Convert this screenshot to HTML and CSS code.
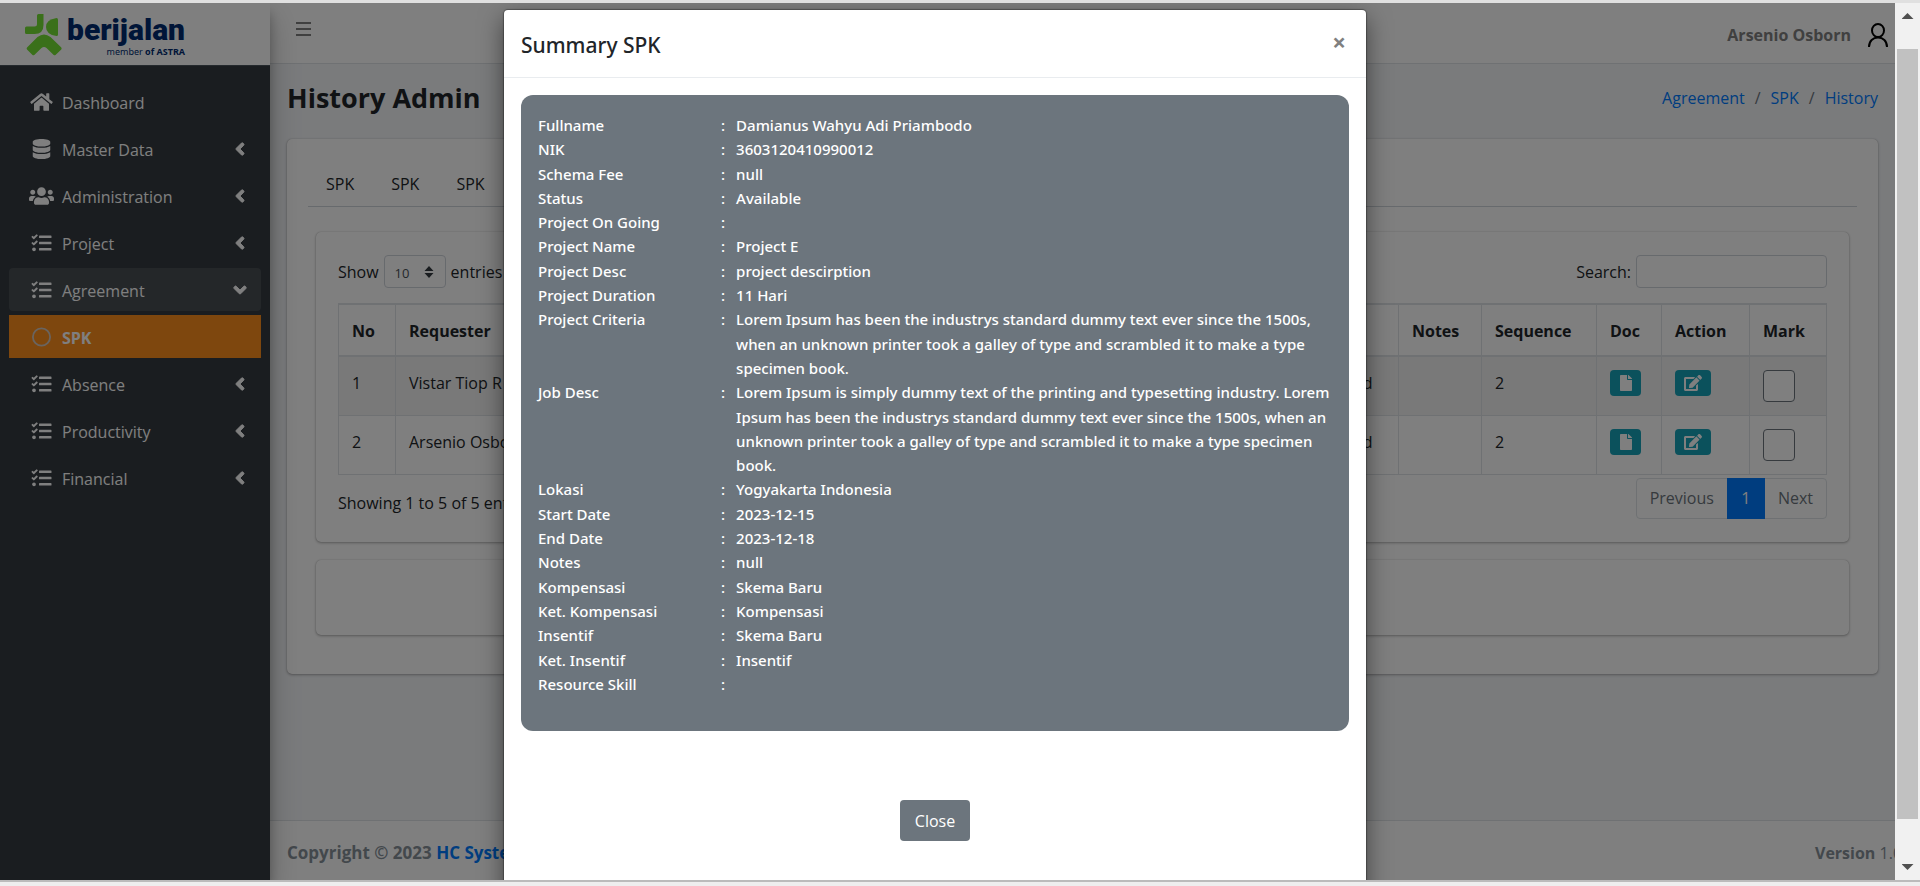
FILE: index.html
```html
<!DOCTYPE html>
<html lang="id">
<head>
<meta charset="utf-8">
<meta name="viewport" content="width=device-width, initial-scale=1">
<title>History Admin</title>
<link rel="stylesheet" href="styles.css">
</head>
<body>
<svg class="sprite" aria-hidden="true">
  <symbol id="i-home" viewBox="0 0 576 512"><path d="M280.37 148.26L96 300.11V464a16 16 0 0 0 16 16l112.06-.29a16 16 0 0 0 15.92-16V368a16 16 0 0 1 16-16h64a16 16 0 0 1 16 16v95.64a16 16 0 0 0 16 16.05L464 480a16 16 0 0 0 16-16V300L295.67 148.26a12.19 12.19 0 0 0-15.3 0zM571.6 251.47L488 182.56V44.05a12 12 0 0 0-12-12h-56a12 12 0 0 0-12 12v72.61L318.47 43a48 48 0 0 0-61 0L4.34 251.47a12 12 0 0 0-1.6 16.9l25.5 31A12 12 0 0 0 45.15 301l235.22-193.74a12.19 12.19 0 0 1 15.3 0L530.9 301a12 12 0 0 0 16.9-1.6l25.5-31a12 12 0 0 0-1.7-16.93z"/></symbol>
  <symbol id="i-database" viewBox="0 0 448 512"><path d="M448 73.143v45.714C448 159.143 347.667 192 224 192S0 159.143 0 118.857V73.143C0 32.857 100.333 0 224 0s224 32.857 224 73.143zM448 176v102.857C448 319.143 347.667 352 224 352S0 319.143 0 278.857V176c48.125 33.143 136.208 48.572 224 48.572S399.874 209.143 448 176zm0 160v102.857C448 479.143 347.667 512 224 512S0 479.143 0 438.857V336c48.125 33.143 136.208 48.572 224 48.572S399.874 369.143 448 336z"/></symbol>
  <symbol id="i-users" viewBox="0 0 640 512"><path d="M96 224c35.3 0 64-28.7 64-64s-28.7-64-64-64-64 28.7-64 64 28.7 64 64 64zm448 0c35.3 0 64-28.7 64-64s-28.7-64-64-64-64 28.7-64 64 28.7 64 64 64zm32 32h-64c-17.6 0-33.5 7.1-45.1 18.6 40.3 22.1 68.9 62 75.1 109.4h66c17.7 0 32-14.3 32-32v-32c0-35.3-28.7-64-64-64zm-256 0c61.9 0 112-50.1 112-112S381.9 32 320 32 208 82.1 208 144s50.1 112 112 112zm76.8 32h-8.3c-20.8 10-43.9 16-68.5 16s-47.6-6-68.5-16h-8.3C179.6 288 128 339.6 128 403.2V432c0 26.5 21.5 48 48 48h288c26.5 0 48-21.5 48-48v-28.8c0-63.6-51.6-115.2-115.2-115.2zm-223.7-13.4C161.5 263.1 145.6 256 128 256H64c-35.3 0-64 28.7-64 64v32c0 17.7 14.3 32 32 32h65.9c6.3-47.4 34.9-87.3 75.2-109.4z"/></symbol>
  <symbol id="i-tasks" viewBox="0 0 512 512"><path d="M139.61 35.5a12 12 0 0 0-17 0L58.93 98.81l-22.7-22.12a12 12 0 0 0-17 0L3.53 92.41a12 12 0 0 0 0 17l47.59 47.4a12.78 12.78 0 0 0 17.61 0l15.59-15.62L156.52 69a12.09 12.09 0 0 0 .09-17zm0 159.19a12 12 0 0 0-17 0l-63.68 63.72-22.7-22.1a12 12 0 0 0-17 0L3.53 252a12 12 0 0 0 0 17L51 316.5a12.77 12.77 0 0 0 17.6 0l15.7-15.69 72.2-72.22a12 12 0 0 0 .09-16.9zM64 368c-26.49 0-48.59 21.5-48.59 48S37.53 464 64 464a48 48 0 0 0 0-96zm432 16H208a16 16 0 0 0-16 16v32a16 16 0 0 0 16 16h288a16 16 0 0 0 16-16v-32a16 16 0 0 0-16-16zm0-320H208a16 16 0 0 0-16 16v32a16 16 0 0 0 16 16h288a16 16 0 0 0 16-16V80a16 16 0 0 0-16-16zm0 160H208a16 16 0 0 0-16 16v32a16 16 0 0 0 16 16h288a16 16 0 0 0 16-16v-32a16 16 0 0 0-16-16z"/></symbol>
  <symbol id="i-circle" viewBox="0 0 20 20"><circle cx="10" cy="10" r="8.6" fill="none" stroke="currentColor" stroke-width="1.8"/></symbol>
  <symbol id="i-angle" viewBox="0 0 256 512"><path stroke="currentColor" stroke-width="24" d="M31.7 239l136-136c9.4-9.4 24.6-9.4 33.9 0l22.6 22.6c9.4 9.4 9.4 24.6 0 33.9L127.9 256l96.4 96.4c9.4 9.4 9.4 24.6 0 33.9L201.7 409c-9.4 9.4-24.6 9.4-33.9 0l-136-136c-9.5-9.4-9.5-24.6-.1-34z"/></symbol>
  <symbol id="i-file" viewBox="0 0 384 512"><path d="M224 136V0H24C10.7 0 0 10.7 0 24v464c0 13.3 10.7 24 24 24h336c13.3 0 24-10.7 24-24V160H248c-13.2 0-24-10.8-24-24zm160-14.1v6.1H256V0h6.1c6.4 0 12.5 2.5 17 7l97.9 98c4.5 4.5 7 10.6 7 16.9z"/></symbol>
  <symbol id="i-edit" viewBox="0 0 576 512"><path d="M402.6 83.2l90.2 90.2c3.8 3.8 3.8 10 0 13.8L274.4 405.6l-92.8 10.3c-12.4 1.4-22.9-9.1-21.5-21.5l10.3-92.8L388.8 83.2c3.8-3.8 10-3.8 13.8 0zm162-22.9l-48.8-48.8c-15.2-15.2-39.9-15.2-55.2 0l-35.4 35.4c-3.8 3.8-3.8 10 0 13.8l90.2 90.2c3.8 3.8 10 3.8 13.8 0l35.4-35.4c15.2-15.3 15.2-40 0-55.2zM384 346.2V448H64V128h229.8c3.2 0 6.2-1.3 8.5-3.5l40-40c7.6-7.6 2.2-20.5-8.5-20.5H48C21.5 64 0 85.5 0 112v352c0 26.5 21.5 48 48 48h352c26.5 0 48-21.5 48-48V306.2c0-10.7-12.9-16-20.5-8.5l-40 40c-2.2 2.3-3.5 5.3-3.5 8.5z"/></symbol>
</svg>

<div class="shell">
  <div class="app">
    <aside class="sidebar">
      <a class="brand" href="#" aria-label="berijalan">
        <svg class="brand-mark" viewBox="0 0 37 42" aria-hidden="true">
          <path d="M12 1.5Q12 0 13.500 0H18.500V11Q18.500 20 9.500 20H1.500Q0 20 0 18.500V14Q0 12.500 1.500 12.500H9.500Q12 12.500 12 10Z"/>
          <path d="M33 5.500V20.500Q33 22 31.500 22Q21 20.500 21 13Q21 5.500 31.500 4Q33 4 33 5.500Z"/>
          <path d="M2 33.500L12.500 23Q19 18 25.500 23L36.300 33.500Q37 34.500 36.300 35.400L30.500 41Q29.600 41.600 28.700 41L21.500 34Q19 32 16.500 34L9.300 41Q8.400 41.600 7.500 41L2 35.400Q1.200 34.500 2 33.500Z"/>
        </svg>
        <span class="brand-text">
          <span class="brand-name">berijalan</span>
          <span class="brand-sub">member <b>of ASTRA</b></span>
        </span>
      </a>
      <nav class="menu">
        <a class="menu-item" href="#"><svg class="menu-icon"><use href="#i-home"/></svg><span>Dashboard</span></a>
        <a class="menu-item" href="#"><svg class="menu-icon small"><use href="#i-database"/></svg><span>Master Data</span><svg class="angle"><use href="#i-angle"/></svg></a>
        <a class="menu-item" href="#"><svg class="menu-icon"><use href="#i-users"/></svg><span>Administration</span><svg class="angle"><use href="#i-angle"/></svg></a>
        <a class="menu-item" href="#"><svg class="menu-icon small"><use href="#i-tasks"/></svg><span>Project</span><svg class="angle"><use href="#i-angle"/></svg></a>
        <a class="menu-item open" href="#"><svg class="menu-icon small"><use href="#i-tasks"/></svg><span>Agreement</span><svg class="angle expanded"><use href="#i-angle"/></svg></a>
        <a class="menu-item active" href="#"><svg class="menu-icon small"><use href="#i-circle"/></svg><span>SPK</span></a>
        <a class="menu-item" href="#"><svg class="menu-icon small"><use href="#i-tasks"/></svg><span>Absence</span><svg class="angle"><use href="#i-angle"/></svg></a>
        <a class="menu-item" href="#"><svg class="menu-icon small"><use href="#i-tasks"/></svg><span>Productivity</span><svg class="angle"><use href="#i-angle"/></svg></a>
        <a class="menu-item" href="#"><svg class="menu-icon small"><use href="#i-tasks"/></svg><span>Financial</span><svg class="angle"><use href="#i-angle"/></svg></a>
      </nav>
    </aside>

    <div class="page">
      <header class="navbar">
        <button class="burger" type="button" aria-label="Menu"><span></span><span></span><span></span></button>
        <div class="user">
          <b>Arsenio Osborn</b>
          <svg class="avatar" viewBox="0 0 20 24" fill="none" stroke="#000" stroke-width="2" aria-hidden="true"><ellipse cx="10" cy="7.500" rx="6" ry="6.500"/><path d="M1 24C1 18 5 14.500 10 14.500S19 18 19 24"/></svg>
        </div>
      </header>

      <main class="content">
        <div class="heading">
          <h1>History Admin</h1>
          <nav class="crumbs"><a href="#">Agreement</a><span>/</span><a href="#">SPK</a><span>/</span><a href="#">History</a></nav>
        </div>

        <section class="card outer">
          <nav class="tabs"><a href="#">SPK</a><a href="#">SPK</a><a href="#">SPK</a></nav>
          <div class="panels">
            <div class="card panel">
              <div class="controls">
                <label>Show
                  <span class="select-wrap"><select class="length"><option>10</option></select>
                  <svg viewBox="0 0 10 12" aria-hidden="true"><path d="M5 0L9.500 5H.5zM5 12L.5 7h9z"/></svg></span>
                  entries</label>
                <label>Search: <input class="search" type="search"></label>
              </div>
              <table class="grid">
                <colgroup><col class="c-no"><col><col class="c-status"><col class="c-notes"><col class="c-seq"><col class="c-doc"><col class="c-action"><col class="c-mark"></colgroup>
                <thead><tr><th>No</th><th>Requester</th><th>Status</th><th>Notes</th><th>Sequence</th><th>Doc</th><th>Action</th><th>Mark</th></tr></thead>
                <tbody>
                  <tr>
                    <td>1</td><td>Vistar Tiop R</td><td>Approved</td><td></td><td>2</td>
                    <td><button class="icon-btn doc" type="button" aria-label="Document"><svg><use href="#i-file"/></svg></button></td>
                    <td><button class="icon-btn" type="button" aria-label="Edit"><svg><use href="#i-edit"/></svg></button></td>
                    <td><input class="mark" type="checkbox" aria-label="Mark 1"></td>
                  </tr>
                  <tr>
                    <td>2</td><td>Arsenio Osborn</td><td>Approved</td><td></td><td>2</td>
                    <td><button class="icon-btn doc" type="button" aria-label="Document"><svg><use href="#i-file"/></svg></button></td>
                    <td><button class="icon-btn" type="button" aria-label="Edit"><svg><use href="#i-edit"/></svg></button></td>
                    <td><input class="mark" type="checkbox" aria-label="Mark 2"></td>
                  </tr>
                </tbody>
              </table>
              <div class="table-foot">
                <span>Showing 1 to 5 of 5 entries</span>
                <div class="pager"><button type="button">Previous</button><button class="current" type="button">1</button><button type="button">Next</button></div>
              </div>
            </div>
            <div class="card blank"></div>
          </div>
        </section>
      </main>

      <footer class="footer">
        <b class="copyright">Copyright © 2023 <a href="#">HC System</a></b>
        <span class="version"><b>Version</b> 1.0</span>
      </footer>
    </div>

    <div class="backdrop"></div>
    <div class="modal" role="dialog" aria-modal="true" aria-labelledby="modal-title">
      <div class="dialog">
        <div class="dialog-head">
          <h2 id="modal-title">Summary SPK</h2>
          <button class="dismiss" type="button" aria-label="Dismiss">×</button>
        </div>
        <div class="dialog-body">
          <dl class="summary">
            <dt>Fullname</dt><dd>Damianus Wahyu Adi Priambodo</dd>
            <dt>NIK</dt><dd>3603120410990012</dd>
            <dt>Schema Fee</dt><dd>null</dd>
            <dt>Status</dt><dd>Available</dd>
            <dt>Project On Going</dt><dd></dd>
            <dt>Project Name</dt><dd>Project E</dd>
            <dt>Project Desc</dt><dd>project descirption</dd>
            <dt>Project Duration</dt><dd>11 Hari</dd>
            <dt>Project Criteria</dt><dd>Lorem Ipsum has been the industrys standard dummy text ever since the 1500s, when an unknown printer took a galley of type and scrambled it to make a type specimen book.</dd>
            <dt>Job Desc</dt><dd>Lorem Ipsum is simply dummy text of the printing and typesetting industry. Lorem Ipsum has been the industrys standard dummy text ever since the 1500s, when an unknown printer took a galley of type and scrambled it to make a type specimen book.</dd>
            <dt>Lokasi</dt><dd>Yogyakarta Indonesia</dd>
            <dt>Start Date</dt><dd>2023-12-15</dd>
            <dt>End Date</dt><dd>2023-12-18</dd>
            <dt>Notes</dt><dd>null</dd>
            <dt>Kompensasi</dt><dd>Skema Baru</dd>
            <dt>Ket. Kompensasi</dt><dd>Kompensasi</dd>
            <dt>Insentif</dt><dd>Skema Baru</dd>
            <dt>Ket. Insentif</dt><dd>Insentif</dd>
            <dt>Resource Skill</dt><dd></dd>
          </dl>
          <button class="close-btn" type="button">Close</button>
        </div>
      </div>
    </div>
  </div>

  <div class="scrollbar" aria-hidden="true">
    <span class="arrow arrow-up"></span>
    <span class="thumb"></span>
    <span class="arrow arrow-down"></span>
  </div>
</div>
</body>
</html>
```
FILE: styles.css
```css
* { box-sizing: border-box; }

body {
  margin: 0;
  height: 100vh;
  display: flex;
  flex-direction: column;
  overflow: hidden;
  font: 16px/24px "Open Sans", "Noto Sans", sans-serif;
  color: #212529;
  background: #eee;
}

a { color: #007bff; text-decoration: none; }
button, input, select { font: inherit; }
svg { fill: currentColor; }
.sprite { position: absolute; width: 0; height: 0; }

.shell {
  flex: 1;
  min-height: 0;
  display: flex;
  margin-bottom: 4px;
  border-top: 3px solid #e0e0e0;
  border-bottom: 2px solid #bbb;
}

.app {
  position: relative;
  flex: 1;
  min-width: 0;
  display: flex;
  overflow: hidden;
}

/* Sidebar */
.sidebar {
  position: relative;
  z-index: 1;
  width: 270px;
  flex: none;
  background: #343a40;
  color: #fff;
  box-shadow: 0 14px 28px rgba(0, 0, 0, .25), 0 10px 10px rgba(0, 0, 0, .22);
}

.brand {
  display: flex;
  gap: 5px;
  height: 63px;
  padding: 11px 25px 0;
  background: #fff;
  border-bottom: 1px solid #4b545c;
}

.brand-mark { width: 37px; height: 42px; fill: #74e034; }
.brand-text { display: flex; flex-direction: column; color: #002b70; }
.brand-name { font: 900 30px/31px Roboto, sans-serif; }
.brand-sub { font: 9px/14px "Noto Sans", sans-serif; text-align: right; }

.menu { display: flex; flex-direction: column; gap: 4px; padding: 14px 9px; }

.menu-item {
  display: flex;
  align-items: center;
  gap: 8px;
  height: 43px;
  padding: 0 16px 0 20px;
  border-radius: 4px;
  color: #fff;
}

.menu-item span { padding-top: 3px; }
.menu-icon { width: 25px; height: 20px; }
.menu-icon.small { padding: 0 2px; }
.angle { width: 10px; height: 20px; margin-left: auto; }
.angle.expanded { transform: rotate(-90deg); }
.open { background: #484e53; }
.active { background: #fd8e1c; border-radius: 0; font-weight: 700; }
.active .menu-icon { color: #d3c9c0; }

/* Page */
.page {
  flex: 1;
  min-width: 0;
  display: flex;
  flex-direction: column;
  background: #f4f6f9;
}

.navbar {
  display: flex;
  align-items: center;
  justify-content: space-between;
  height: 61px;
  padding: 4px 7px 0 26px;
  background: #fff;
  border-bottom: 1px solid #dee2e6;
}

.burger {
  display: flex;
  flex-direction: column;
  gap: 4px;
  width: 15px;
  padding: 0 0 13px;
  border: 0;
  background: none;
}

.burger span { height: 2px; background: #808080; }
.user { display: flex; align-items: center; gap: 17px; color: #808080; }
.avatar { width: 20px; height: 24px; fill: none; }

.content { flex: 1; padding: 0 17px; }

.heading {
  display: flex;
  align-items: center;
  justify-content: space-between;
  height: 75px;
  padding-bottom: 7px;
}

h1 { margin: 0; font-size: 27px; line-height: 36px; }
.crumbs { display: flex; gap: 10px; color: #6c757d; }

.card {
  background: #fff;
  border-radius: 5px;
  box-shadow: 0 0 1px rgba(0, 0, 0, .25), 0 1px 3px rgba(0, 0, 0, .3);
}

.outer { padding: 21px 21px 39px; }
.tabs { display: flex; gap: 1px; padding-bottom: 10px; border-bottom: 1px solid #ced4da; }
.tabs a { padding: 12px 18px 0; color: #212529; }

.panels { display: flex; flex-direction: column; gap: 18px; padding: 25px 8px 0; }
.panel { padding: 23px 22px; }
.blank { height: 75px; }

.controls { display: flex; justify-content: space-between; margin-bottom: 15px; }
.controls label { display: flex; align-items: center; gap: 5px; }
.select-wrap { position: relative; display: flex; }
.select-wrap svg { position: absolute; right: 12px; top: 11px; width: 10px; height: 12px; color: #343a40; pointer-events: none; }

.length, .search {
  height: 33px;
  border: 1px solid #ced4da;
  border-radius: 4px;
  background: #fff;
  color: #495057;
  font-size: 13px;
  appearance: none;
}

.length { width: 62px; padding: 2px 10px 0; }
.search { width: 191px; padding: 0 8px; }

.grid {
  width: 100%;
  table-layout: fixed;
  border-collapse: collapse;
  border: 1px solid #dee2e6;
}

.grid th, .grid td { padding: 13px; border: 1px solid #dee2e6; text-align: left; vertical-align: top; }
.grid th { border-width: 2px 1px; padding: 14px 13px 12px; }
.grid td { height: 59px; padding-bottom: 0; line-height: 26px; }
.grid tbody tr:first-child { background: #f2f2f2; }
.c-no { width: 57px; }
.c-status { width: 112px; }
.c-notes { width: 83px; }
.c-seq { width: 115px; }
.c-doc { width: 65px; }
.c-action { width: 88px; }
.c-mark { width: 77px; }

.icon-btn {
  display: flex;
  align-items: center;
  justify-content: center;
  width: 36px;
  height: 26px;
  padding: 0;
  border: 0;
  border-radius: 4px;
  background: #17a2b8;
  color: #fff;
}

.icon-btn svg { width: 18px; height: 16px; }
.icon-btn.doc { width: 31px; }

.mark {
  display: block;
  width: 32px;
  height: 32px;
  margin: 0;
  border: 1px solid #6c757d;
  border-radius: 4px;
  background: #fff;
  appearance: none;
}

.table-foot { display: flex; align-items: center; justify-content: space-between; padding-top: 3px; }
.table-foot > span { padding-top: 10px; }
.pager { display: flex; height: 41px; border: 1px solid #dee2e6; border-radius: 4px; }
.pager button { padding: 0 13px; border: 0; background: none; color: #6c757d; }
.pager .current { width: 38px; margin: -1px 0; padding: 0; background: #007bff; color: #fff; }

.footer {
  display: flex;
  justify-content: space-between;
  height: 60px;
  padding: 20px 0 0 17px;
  background: #fff;
  border-top: 1px solid #dee2e6;
  color: #869099;
}

.copyright { font-size: 17px; }
.version { width: 80px; white-space: nowrap; }

/* Modal */
.backdrop { position: absolute; inset: 0; z-index: 2; background: rgba(0, 0, 0, .5); }

.modal {
  position: absolute;
  inset: 0;
  z-index: 3;
  display: flex;
  align-items: flex-start;
  justify-content: center;
  padding: 7px 25px 0 0;
  overflow: hidden;
}

.dialog {
  width: 100%;
  max-width: 862px;
  border-radius: 4px;
  background: #fff;
  box-shadow: 0 0 1px 1px rgba(0, 0, 0, .3), 0 8px 24px rgba(0, 0, 0, .5);
}

.dialog-head {
  display: flex;
  align-items: flex-start;
  justify-content: space-between;
  padding: 19px 17px 16px;
  border-bottom: 1px solid #e9ecef;
}

h2 { margin: 0; font: 500 21px/32px "Noto Sans", sans-serif; }

.dismiss {
  padding: 0 3px;
  border: 0;
  background: none;
  color: #808080;
  font-size: 24px;
  line-height: 26px;
  font-weight: 700;
}

.dialog-body { display: flex; flex-direction: column; align-items: center; padding: 17px 17px 60px; }

.summary {
  align-self: stretch;
  display: grid;
  grid-template-columns: 183px 1fr;
  margin: 0 0 69px;
  padding: 18px 17px 35px;
  border-radius: 12px;
  background: #6c757d;
  color: #fff;
  font: 500 15px/1.62 "Noto Sans", sans-serif;
}

.summary dt, .summary dd { margin: 0; }
.summary dd { display: flex; gap: 11px; }
.summary dd::before { content: ":"; }

.close-btn {
  height: 41px;
  padding: 0 15px;
  border: 0;
  border-radius: 4px;
  background: #6c757d;
  color: #fff;
}

/* Window scrollbar */
.scrollbar {
  width: 25px;
  flex: none;
  display: flex;
  flex-direction: column;
  align-items: center;
  padding: 10px 0;
  background: #f1f1f1;
}

.arrow { width: 12px; height: 6px; background: #505050; }
.arrow-up { clip-path: polygon(50% 0, 100% 100%, 0 100%); }
.arrow-down { clip-path: polygon(0 0, 100% 0, 50% 100%); }
.thumb { flex: 1; width: 21px; margin: 30px 0 45px; background: #c1c1c1; }
```
